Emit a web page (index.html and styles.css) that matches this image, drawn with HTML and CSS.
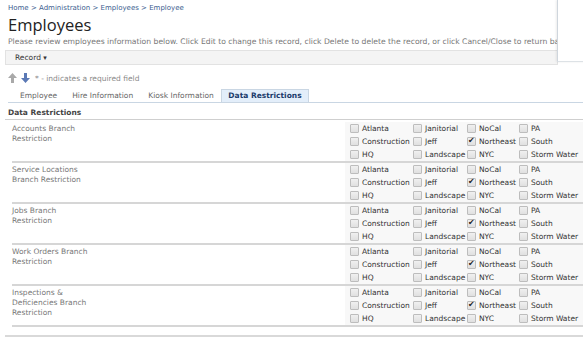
FILE: index.html
```html
<!DOCTYPE html>
<html lang="en">
<head>
  <meta charset="UTF-8" />
  <title>Employees</title>
  <link rel="stylesheet" href="styles.css">
</head>
<body>
  <div class="header">
    <div class="crumbs">Home &gt; Administration &gt; Employees &gt; Employee</div>
    <h1>Employees</h1>
    <p class="intro">Please review employees information below. Click Edit to change this record, click Delete to delete the record, or click Cancel/Close to return back to the list.</p>
  </div>

  <div class="toolbar"><span class="menu">Record <span class="caret">▾</span></span></div>

  <div class="nav-row">
    <svg class="arrow" width="9" height="10" viewBox="0 0 9 10"><path d="M4.5 0 L9 5 L6 5 L6 10 L3 10 L3 5 L0 5 Z" fill="#a9a9a9"/></svg>
    <svg class="arrow" width="9" height="10" viewBox="0 0 9 10"><path d="M3 0 L6 0 L6 5 L9 5 L4.5 10 L0 5 L3 5 Z" fill="#5b79b5"/></svg>
    <span class="req">* - indicates a required field</span>
  </div>

  <div class="tabs">
    <span class="tab">Employee</span>
    <span class="tab">Hire Information</span>
    <span class="tab">Kiosk Information</span>
    <span class="tab active">Data Restrictions</span>
  </div>

  <div class="section-title">Data Restrictions</div>

  <div class="restrictions" id="restrictions"></div>
  <div class="footer-line"></div>

  <div class="side-panel"></div>

  <script>
    const groups = [
      ["Accounts Branch", "Restriction"],
      ["Service Locations", "Branch Restriction"],
      ["Jobs Branch", "Restriction"],
      ["Work Orders Branch", "Restriction"],
      ["Inspections &", "Deficiencies Branch", "Restriction"]
    ];
    const branches = ["Atlanta", "Janitorial", "NoCal", "PA",
                      "Construction", "Jeff", "Northeast", "South",
                      "HQ", "Landscape", "NYC", "Storm Water"];

    const box = document.getElementById("restrictions");
    groups.forEach(lines => {
      const row = document.createElement("div");
      row.className = "r-row";

      const label = document.createElement("div");
      label.className = "r-label";
      label.innerHTML = lines.map(l => l.replace("&", "&amp;")).join("<br>");

      const grid = document.createElement("div");
      grid.className = "r-grid";
      branches.forEach(name => {
        const item = document.createElement("label");
        item.className = "chk";
        const mark = document.createElement("span");
        mark.className = "box" + (name === "Northeast" ? " checked" : "");
        item.append(mark, document.createTextNode(name));
        grid.appendChild(item);
      });

      row.append(label, grid);
      box.appendChild(row);
    });
  </script>
</body>
</html>
```

FILE: styles.css
```css
* {
  box-sizing: border-box;
}

body {
  margin: 0;
  font-family: "DejaVu Sans", Verdana, sans-serif;
  font-size: 7.5px;
  color: #333;
  background: #fff;
  overflow: hidden;
}

.side-panel {
  position: absolute;
  top: 0;
  left: 557px;
  width: 40px;
  height: 62px;
  background: #fff;
  border-left: 1px solid #cfd6dd;
  border-bottom: 1px solid #dde2e6;
  box-shadow: -1px 0 2px rgba(0, 0, 0, 0.08);
}

.header {
  padding: 4px 8px 0;
  white-space: nowrap;
}

.crumbs {
  color: #3b5d8f;
  font-size: 7px;
  height: 10px;
}

h1 {
  margin: 0;
  font-family: "Open Sans", "Noto Sans", sans-serif;
  font-weight: 400;
  font-size: 16.5px;
  line-height: 22px;
  color: #222;
}

.intro {
  margin: 1px 0 0;
  color: #777;
  font-size: 7.65px;
  line-height: 10px;
  overflow: hidden;
}

.toolbar {
  margin: 3px 0 0 5px;
  width: 553px;
  height: 15px;
  background: #f4f4f4;
  border: 1px solid #e2e2e2;
  padding-left: 9px;
  line-height: 13px;
}

.toolbar .caret {
  font-size: 7px;
}

.nav-row {
  display: flex;
  align-items: center;
  gap: 4px;
  padding: 6px 8px 0;
  height: 20px;
  color: #888;
}

.nav-row .req {
  margin-left: 1px;
}

.tabs {
  display: flex;
  margin: 4px 0 0 8px;
  border-bottom: 1px solid #c9d6e3;
  height: 14px;
}

.tab {
  padding: 0 7.5px;
  line-height: 13px;
  color: #666;
}

.tab:first-child {
  margin-left: 4.5px;
}

.tab.active {
  background: #e3eefa;
  border: 1px solid #c9d6e3;
  border-bottom: none;
  color: #1a3a6a;
  font-weight: bold;
  line-height: 12px;
  padding: 0 6px;
}

.section-title {
  padding: 5px 8px 0 3px;
  font-weight: bold;
  color: #444;
  height: 17px;
  border-bottom: 1px solid #cfcfcf;
  margin-left: 5px;
}

.restrictions {
  margin: 2px 0 0 12px;
}

.r-row {
  display: grid;
  grid-template-columns: 333px 1fr;
  height: 41px;
  border-bottom: 2px solid #d6d6d6;
}

.r-label {
  padding: 2px 0 0 0;
  color: #777;
  line-height: 10px;
}

.r-grid {
  background: #f8f8f8;
  display: grid;
  grid-template-columns: 63px 54px 52px 64px;
  grid-auto-rows: 13px;
  padding-left: 5px;
}

.chk {
  display: flex;
  align-items: center;
  gap: 3px;
  white-space: nowrap;
}

.box {
  width: 9px;
  height: 9px;
  border: 1px solid #bdbdbd;
  border-radius: 1px;
  background: linear-gradient(#f0f0f0, #e0e0e0);
  position: relative;
  flex: none;
}

.box.checked::after {
  content: "✔";
  position: absolute;
  left: 0;
  top: -2px;
  font-size: 8px;
  color: #222;
}

.footer-line {
  margin: 8px 0 0 5px;
  border-top: 2px solid #d9d9d9;
  box-shadow: 0 1px 1px rgba(0, 0, 0, 0.05);
}
```
